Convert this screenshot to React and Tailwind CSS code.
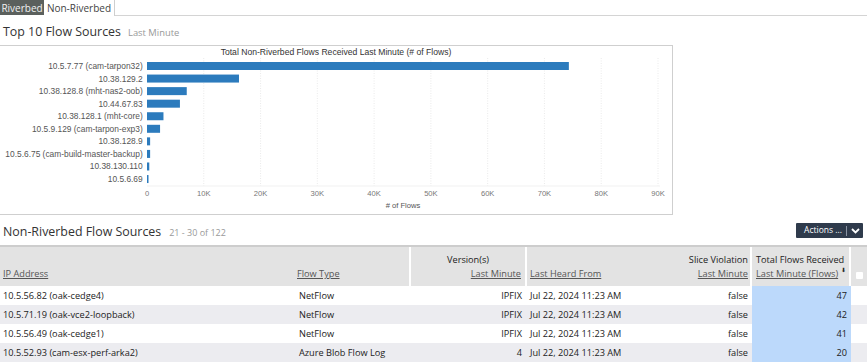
import React from "react";

const bars = [
  ["10.5.7.77 (cam-tarpon32)", 74300],
  ["10.38.129.2", 16200],
  ["10.38.128.8 (mht-nas2-oob)", 7000],
  ["10.44.67.83", 5800],
  ["10.38.128.1 (mht-core)", 2900],
  ["10.5.9.129 (cam-tarpon-exp3)", 2300],
  ["10.38.128.9", 550],
  ["10.5.6.75 (cam-build-master-backup)", 550],
  ["10.38.130.110", 400],
  ["10.5.6.69", 250],
];

const rows = [
  ["10.5.56.82 (oak-cedge4)", "NetFlow", "IPFIX", "Jul 22, 2024 11:23 AM", "false", "47"],
  ["10.5.71.19 (oak-vce2-loopback)", "NetFlow", "IPFIX", "Jul 22, 2024 11:23 AM", "false", "42"],
  ["10.5.56.49 (oak-cedge1)", "NetFlow", "IPFIX", "Jul 22, 2024 11:23 AM", "false", "41"],
  ["10.5.52.93 (cam-esx-perf-arka2)", "Azure Blob Flow Log", "4", "Jul 22, 2024 11:23 AM", "false", "20"],
];

const X0 = 147;
const PX = 511 / 90000;

function Chart() {
  const ticks = [0, 10, 20, 30, 40, 50, 60, 70, 80, 90];
  return (
    <svg width="672" height="168" viewBox="0 46 672 168" style={{ fontFamily: '"Liberation Sans", Arial, sans-serif' }}>
      <text x="336" y="54.5" textAnchor="middle" fontSize="8.6" fill="#333">
        Total Non-Riverbed Flows Received Last Minute (# of Flows)
      </text>
      {ticks.map((t) => {
        const x = X0 + t * 1000 * PX;
        return (
          <g key={t}>
            {t > 0 && (
              <line x1={x} x2={x} y1="58" y2="186" stroke="#e4e4e4" strokeWidth="0.8" strokeDasharray="1 1.5" />
            )}
            <text x={x} y="196" textAnchor="middle" fontSize="7.6" fill="#777">
              {t === 0 ? "0" : `${t}K`}
            </text>
          </g>
        );
      })}
      <line x1={X0} x2="660" y1="186" y2="186" stroke="#eee" strokeWidth="0.8" />
      {bars.map(([label, v], i) => {
        const cy = 66 + i * 12.56;
        return (
          <g key={label}>
            <text x="142.7" y={cy + 3} textAnchor="end" fontSize="8.4" fill="#555">
              {label}
            </text>
            <rect x={X0} y={cy - 4} width={Math.max(1.5, v * PX)} height="8" fill="#2c7bbd" />
          </g>
        );
      })}
      <text x="403" y="208" textAnchor="middle" fontSize="7.6" fill="#555">
        # of Flows
      </text>
    </svg>
  );
}

export default function App() {
  return (
    <div
      className="w-[867px] h-[362px] overflow-hidden bg-white text-[#333]"
      style={{ fontFamily: '"Open Sans", "Noto Sans", sans-serif' }}
    >
      {/* Tabs */}
      <div className="flex h-[16px] text-[10px] leading-none">
        <div className="w-[44px] h-[15px] bg-[#5b605d] text-[#f0f0f0] flex items-center justify-center">Riverbed</div>
        <div className="w-[71px] h-[16px] bg-white text-[#444] border-r border-[#cfcfcf] flex items-center justify-center pb-[1px]">
          Non-Riverbed
        </div>
        <div className="flex-1 border-b border-[#d4d4d4]" />
      </div>

      {/* Title */}
      <div className="h-[29px] flex items-center pl-[3px] pt-[3px] gap-[7px]">
        <span className="text-[12.4px] text-[#333]">Top 10 Flow Sources</span>
        <span className="text-[9.4px] text-[#999] mt-[2px]">Last Minute</span>
      </div>

      {/* Chart box */}
      <div className="w-[673px] h-[170px] border-t border-r border-b border-[#cfcfcf] bg-white">
        <Chart />
      </div>

      {/* Section 2 header */}
      <div className="h-[30px] flex items-center justify-between pl-[3px] pr-[4px]">
        <div className="flex items-baseline gap-[8px] mt-[4px]">
          <span className="text-[12.4px] text-[#333]">Non-Riverbed Flow Sources</span>
          <span className="text-[9px] text-[#999]">21 - 30 of 122</span>
        </div>
        <div className="flex items-center h-[15px] w-[67px] bg-[#2f3b4c] text-white text-[8.5px] rounded-[1px] mt-[1px]">
          <span className="flex-1 text-center pl-[4px]">Actions ...</span>
          <span className="w-px h-[10px] bg-[#8a94a3]" />
          <span className="w-[16px] flex items-center justify-center">
            <svg width="9" height="6" viewBox="0 0 9 6">
              <path d="M1 1 L4.5 4.5 L8 1" fill="none" stroke="white" strokeWidth="1.8" />
            </svg>
          </span>
        </div>
      </div>

      {/* Table */}
      <div className="border-t-2 border-[#cdcdcd] text-[9.2px] text-[#222]">
        {/* Header */}
        <div className="grid grid-cols-[411px_116px_225px_99px_16px] bg-[#e3e3e3] h-[39px]">
          <div className="flex items-end pl-[3px] pb-[5px] border-r-2 border-white">
            <div className="w-[294px] underline text-[#555]">IP Address</div>
            <div className="underline text-[#555]">Flow Type</div>
          </div>
          <div className="flex flex-col justify-between pt-[6px] pb-[5px] border-r-2 border-white">
            <div className="pl-[36px]">Version(s)</div>
            <div className="text-right pr-[4px] underline text-[#555]">Last Minute</div>
          </div>
          <div className="flex flex-col justify-between pt-[6px] pb-[5px] border-r-2 border-white">
            <div className="text-right pr-[2px]">Slice Violation</div>
            <div className="flex justify-between pl-[3px] pr-[2px]">
              <span className="underline text-[#555]">Last Heard From</span>
              <span className="underline text-[#555]">Last Minute</span>
            </div>
          </div>
          <div className="flex flex-col justify-between pt-[6px] pb-[5px] border-r-2 border-white">
            <div className="pl-[4px]">Total Flows Received</div>
            <div className="pl-[4px] flex items-start gap-[3px]">
              <span className="underline text-[#555]">Last Minute (Flows)</span>
              <span className="text-[6px] leading-none">⬇</span>
            </div>
          </div>
          <div className="flex items-end justify-center pb-[7px]">
            <div className="w-[7px] h-[7px] bg-white rounded-[1px]" />
          </div>
        </div>
        {/* Rows */}
        {rows.map((r, i) => (
          <div
            key={r[0]}
            className={`grid grid-cols-[296px_115px_116px_153px_72px_99px_16px] h-[19px] items-center ${
              i % 2 === 1 ? "bg-[#ececf0]" : "bg-white"
            }`}
          >
            <div className="pl-[3px]">{r[0]}</div>
            <div className="pl-[3px]">{r[1]}</div>
            <div className="text-right pr-[5px]">{r[2]}</div>
            <div className="pl-[3px]">{r[3]}</div>
            <div className="text-right pr-[4px]">{r[4]}</div>
            <div className="h-full bg-[#bcd9fb] flex items-center justify-end pr-[4px]">{r[5]}</div>
            <div />
          </div>
        ))}
      </div>
    </div>
  );
}
